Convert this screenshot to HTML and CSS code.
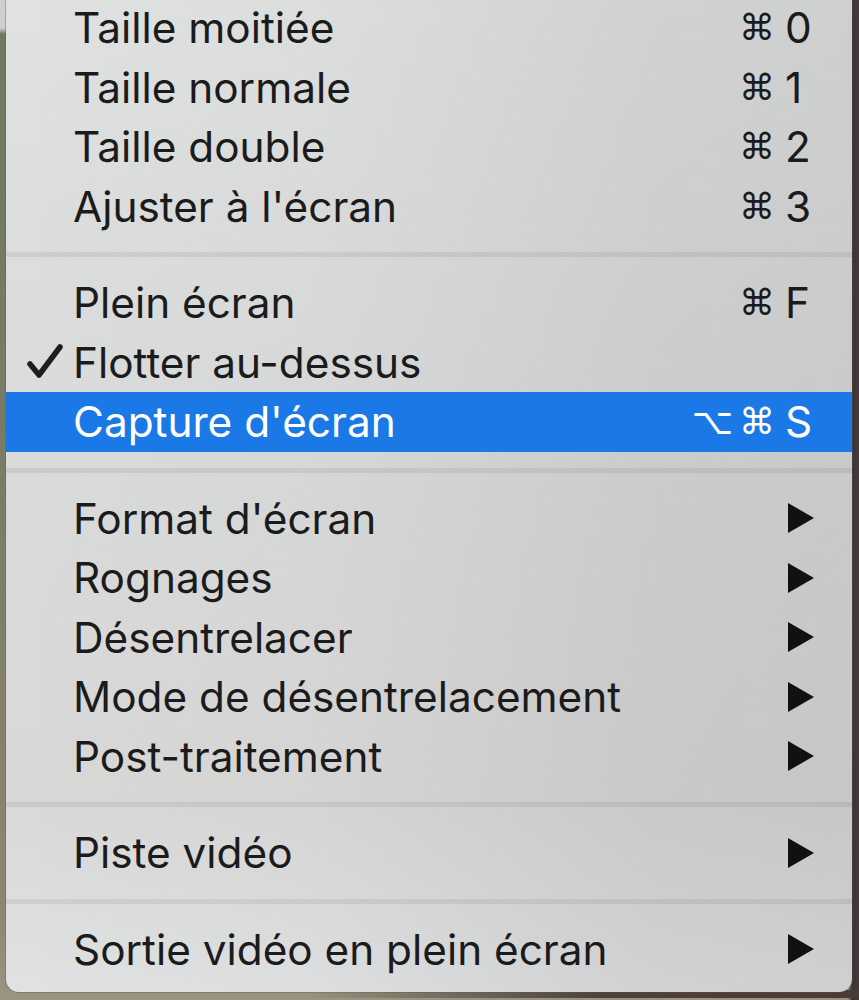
FILE: index.html
```html
<!DOCTYPE html>
<html lang="fr">
<head>
<meta charset="utf-8">
<title>Menu</title>
<link rel="stylesheet" href="styles.css">
</head>
<body>
<div class="backdrop">
  <div class="menu">
    <div class="item"><span class="check"></span><span class="label">Taille moitiée</span><span class="key"><span class="mods">⌘</span><span class="char">0</span></span></div>
    <div class="item"><span class="check"></span><span class="label">Taille normale</span><span class="key"><span class="mods">⌘</span><span class="char">1</span></span></div>
    <div class="item"><span class="check"></span><span class="label">Taille double</span><span class="key"><span class="mods">⌘</span><span class="char">2</span></span></div>
    <div class="item"><span class="check"></span><span class="label">Ajuster à l'écran</span><span class="key"><span class="mods">⌘</span><span class="char">3</span></span></div>
    <div class="sep"></div>
    <div class="item"><span class="check"></span><span class="label">Plein écran</span><span class="key"><span class="mods">⌘</span><span class="char">F</span></span></div>
    <div class="item"><span class="check"><svg class="tick" viewBox="0 0 36 36" width="36" height="36"><path d="M3 21 L12 32 L33 4" fill="none" stroke="#1e1e1e" stroke-width="5.5" stroke-linecap="round" stroke-linejoin="round"/></svg></span><span class="label">Flotter au-dessus</span><span class="key"></span></div>
    <div class="item active"><span class="check"></span><span class="label">Capture d'écran</span><span class="key"><span class="mods">⌥⌘</span><span class="char">S</span></span></div>
    <div class="sep"></div>
    <div class="item"><span class="check"></span><span class="label">Format d'écran</span><span class="key"><svg class="arrow" viewBox="0 0 28 30" width="28" height="30"><polygon points="1,0 27,15 1,30" fill="#111"/></svg></span></div>
    <div class="item"><span class="check"></span><span class="label">Rognages</span><span class="key"><svg class="arrow" viewBox="0 0 28 30" width="28" height="30"><polygon points="1,0 27,15 1,30" fill="#111"/></svg></span></div>
    <div class="item"><span class="check"></span><span class="label">Désentrelacer</span><span class="key"><svg class="arrow" viewBox="0 0 28 30" width="28" height="30"><polygon points="1,0 27,15 1,30" fill="#111"/></svg></span></div>
    <div class="item"><span class="check"></span><span class="label">Mode de désentrelacement</span><span class="key"><svg class="arrow" viewBox="0 0 28 30" width="28" height="30"><polygon points="1,0 27,15 1,30" fill="#111"/></svg></span></div>
    <div class="item"><span class="check"></span><span class="label">Post-traitement</span><span class="key"><svg class="arrow" viewBox="0 0 28 30" width="28" height="30"><polygon points="1,0 27,15 1,30" fill="#111"/></svg></span></div>
    <div class="sep"></div>
    <div class="item"><span class="check"></span><span class="label">Piste vidéo</span><span class="key"><svg class="arrow" viewBox="0 0 28 30" width="28" height="30"><polygon points="1,0 27,15 1,30" fill="#111"/></svg></span></div>
    <div class="sep"></div>
    <div class="item"><span class="check"></span><span class="label">Sortie vidéo en plein écran</span><span class="key"><svg class="arrow" viewBox="0 0 28 30" width="28" height="30"><polygon points="1,0 27,15 1,30" fill="#111"/></svg></span></div>
  </div>
</div>
</body>
</html>
```

FILE: styles.css
```css
html, body {
  margin: 0;
  padding: 0;
  height: 1000px;
  overflow: hidden;
}

body {
  background:
    linear-gradient(to right, transparent 0, transparent 848px, #3d3236 852px, #45383a 100%),
    linear-gradient(to bottom, #cfcfcc 0, #cfcfcc 28px, #6e7862 34px, #7b7d66 500px, #8c866f 900px, #9a9482 1000px);
}

.backdrop {
  height: 1000px;
  background: linear-gradient(to right, transparent 0, transparent 300px, rgba(70, 55, 52, 0.9) 600px, #4a3a36 100%) bottom / 100% 8px no-repeat;
}

.menu {
  margin: -2px 7px 0 6px;
  padding-bottom: 13px;
  border-radius: 0 0 13px 13px;
  background:
    linear-gradient(to right, rgba(60, 50, 56, 0) 0, rgba(60, 50, 56, 0.02) 300px, rgba(60, 50, 56, 0.09) 650px, rgba(60, 50, 56, 0.1) 100%),
    linear-gradient(to bottom, #dfe2e1 0, #dcdedd 230px, #d9dada 500px, #d8d8d7 800px, #e0e2e3 1000px);
  box-shadow: 0 0 0 1px rgba(90, 90, 90, 0.35);
  font-family: "Inter", "DejaVu Sans", sans-serif;
  font-size: 42.3px;
  color: #1b1b1b;
}

.item {
  height: 59.5px;
  display: flex;
  align-items: center;
  padding-right: 40px;
}

.check {
  width: 67px;
  flex: none;
  display: flex;
  justify-content: flex-end;
  padding-right: 10px;
  box-sizing: border-box;
}

.tick {
  display: block;
  margin-top: -2px;
}

.label {
  flex: 1;
  white-space: nowrap;
}

.key {
  display: flex;
  align-items: center;
  white-space: nowrap;
}

.mods {
  font-family: "DejaVu Sans", sans-serif;
  font-size: 36px;
  letter-spacing: 6px;
  margin-right: 4px;
}

.char {
  width: 27px;
  text-align: left;
}

.arrow {
  display: block;
  margin-right: -3px;
}

.item.active {
  background: #1b79e7;
  color: #fff;
}

.sep {
  height: 37px;
  display: flex;
  align-items: center;
}

.sep::before {
  content: "";
  display: block;
  width: 100%;
  height: 5px;
  background: rgba(0, 0, 0, 0.065);
}
```
